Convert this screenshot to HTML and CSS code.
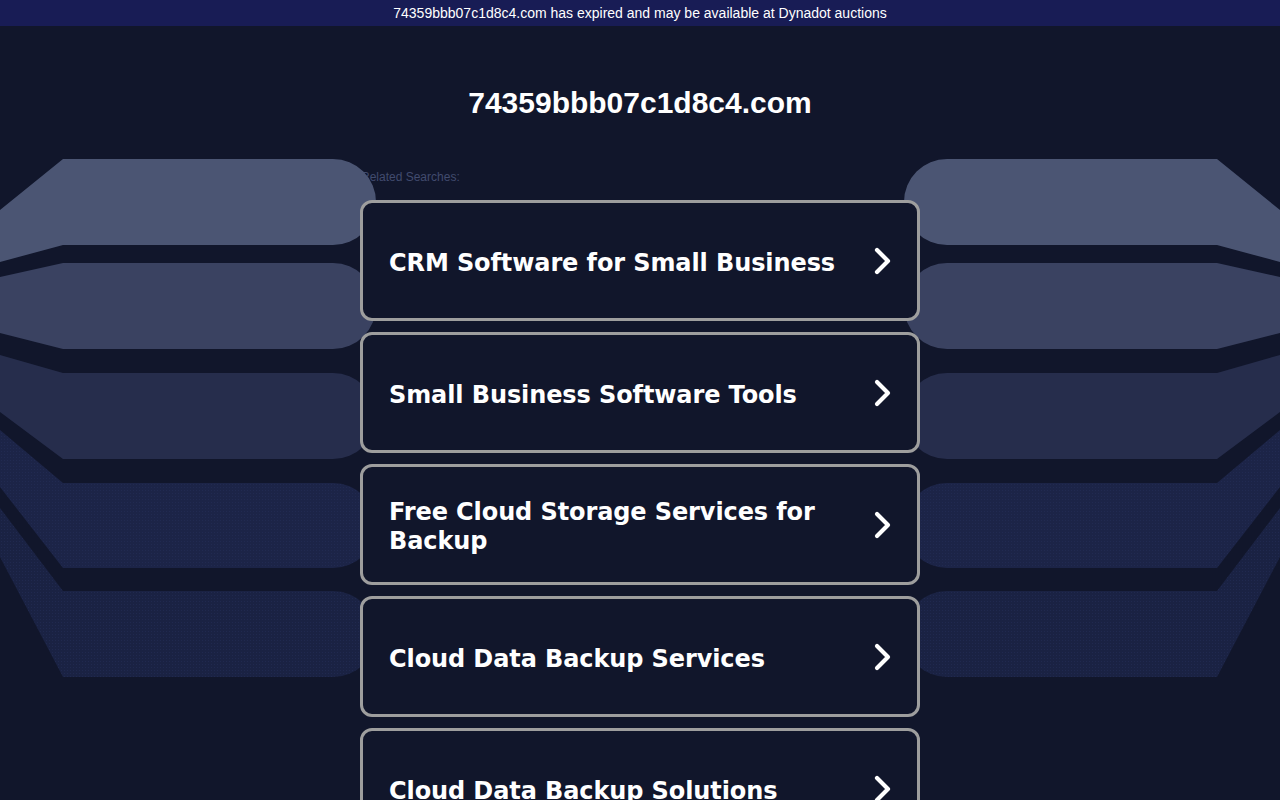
FILE: index.html
```html
<!DOCTYPE html>
<html lang="en">
<head>
<meta charset="utf-8">
<title>74359bbb07c1d8c4.com</title>
<link rel="stylesheet" href="styles.css">
</head>
<body>
<div class="topbar">74359bbb07c1d8c4.com has expired and may be available at Dynadot auctions</div>
<svg class="bg" width="1280" height="800" viewBox="0 0 1280 800" aria-hidden="true">
  <defs>
    <pattern id="dots4" width="3" height="3" patternUnits="userSpaceOnUse">
      <rect width="3" height="3" fill="#1c2447"/>
      <rect x="1" y="1" width="1" height="1" fill="#212a51"/>
    </pattern>
    <pattern id="dots5" width="3" height="3" patternUnits="userSpaceOnUse">
      <rect width="3" height="3" fill="#1a2243"/>
      <rect x="1" y="1" width="1" height="1" fill="#20294f"/>
    </pattern>
    <g id="bands">
      <path fill="#4b5573" d="M0 210 L63 159 L333 159 A43 43 0 0 1 376 202 A43 43 0 0 1 333 245 L63 245 L0 262 Z"/>
      <path fill="#3a4261" d="M0 277 L63 263 L333 263 A43 43 0 0 1 376 306 A43 43 0 0 1 333 349 L63 349 L0 333 Z"/>
      <path fill="#262d4c" d="M0 355 L63 373 L333 373 A43 43 0 0 1 376 416 A43 43 0 0 1 333 459 L63 459 L0 412 Z"/>
      <path fill="url(#dots4)" d="M0 430 L63 483 L333 483 A43 43 0 0 1 376 526 A43 43 0 0 1 333 568 L63 568 L0 487 Z"/>
      <path fill="url(#dots5)" d="M0 508 L63 591 L333 591 A43 43 0 0 1 376 634 A43 43 0 0 1 333 677 L63 677 L0 557 Z"/>
    </g>
  </defs>
  <use href="#bands"/>
  <use href="#bands" transform="translate(1280 0) scale(-1 1)"/>
</svg>
<main class="page">
  <h1 class="domain">74359bbb07c1d8c4.com</h1>
  <div class="related">Related Searches:</div>
  <ul class="links">
    <li class="card"><span class="label">CRM Software for Small Business</span><svg class="chev" width="20" height="30" viewBox="0 0 20 30"><path d="M4 4 L15 15 L4 26" fill="none" stroke="#fff" stroke-width="4.2" stroke-linecap="round" stroke-linejoin="round"/></svg></li>
    <li class="card"><span class="label">Small Business Software Tools</span><svg class="chev" width="20" height="30" viewBox="0 0 20 30"><path d="M4 4 L15 15 L4 26" fill="none" stroke="#fff" stroke-width="4.2" stroke-linecap="round" stroke-linejoin="round"/></svg></li>
    <li class="card"><span class="label">Free Cloud Storage Services for Backup</span><svg class="chev" width="20" height="30" viewBox="0 0 20 30"><path d="M4 4 L15 15 L4 26" fill="none" stroke="#fff" stroke-width="4.2" stroke-linecap="round" stroke-linejoin="round"/></svg></li>
    <li class="card"><span class="label">Cloud Data Backup Services</span><svg class="chev" width="20" height="30" viewBox="0 0 20 30"><path d="M4 4 L15 15 L4 26" fill="none" stroke="#fff" stroke-width="4.2" stroke-linecap="round" stroke-linejoin="round"/></svg></li>
    <li class="card"><span class="label">Cloud Data Backup Solutions</span><svg class="chev" width="20" height="30" viewBox="0 0 20 30"><path d="M4 4 L15 15 L4 26" fill="none" stroke="#fff" stroke-width="4.2" stroke-linecap="round" stroke-linejoin="round"/></svg></li>
  </ul>
</main>
</body>
</html>
```
FILE: styles.css
```css
html, body {
  margin: 0;
  padding: 0;
  background: #11162b;
  font-family: "Liberation Sans", Arial, sans-serif;
  color: #fff;
  overflow: hidden;
  height: 800px;
}
.topbar {
  height: 26px;
  line-height: 26px;
  background: #181c55;
  color: #fff;
  font-size: 14px;
  text-align: center;
}
.bg {
  position: absolute;
  top: 0;
  left: 0;
}
.page {
  width: 560px;
  margin: 0 auto;
}
.domain {
  margin: 0;
  padding-top: 59px;
  font-size: 30px;
  line-height: 36px;
  font-weight: bold;
  text-align: center;
}
.related {
  margin-top: 49px;
  font-size: 12px;
  line-height: 14px;
  color: #414b6e;
  padding-left: 1px;
}
.links {
  list-style: none;
  margin: 16px 0 0;
  padding: 0;
  display: flex;
  flex-direction: column;
  gap: 11px;
}
.card {
  position: relative;
  z-index: 1;
  box-sizing: border-box;
  height: 121px;
  border: 3px solid #9e9e9e;
  border-radius: 12px;
  background: #11162b;
  display: flex;
  align-items: center;
  justify-content: space-between;
  padding: 5px 24px 0 26px;
}
.label {
  font-family: "DejaVu Sans", Verdana, sans-serif;
  font-weight: bold;
  font-size: 24px;
  line-height: 29px;
  letter-spacing: -0.1px;
  max-width: 460px;
}
.chev {
  flex: none;
  display: block;
  margin-top: -4px;
}
```
